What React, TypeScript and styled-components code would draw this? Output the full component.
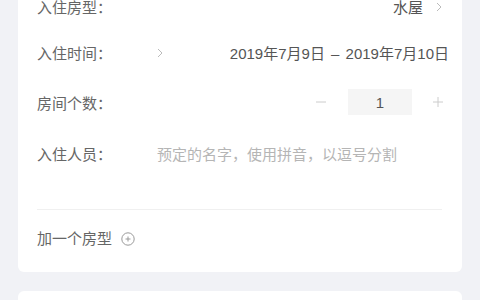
import React, { useState } from "react";
import styled, { createGlobalStyle } from "styled-components";

const GlobalStyle = createGlobalStyle`
  html, body {
    margin: 0;
    padding: 0;
    background: #f1f2f6;
    font-family: "Liberation Sans", "Noto Sans CJK SC", sans-serif;
  }
`;

const Page = styled.div`
  padding: 0 18px;
  margin-top: -17px;
  display: flex;
  flex-direction: column;
  gap: 19px;
`;

const Card = styled.div`
  background: #fff;
  border-radius: 6px;
  padding: 0 20px 0 19px;
`;

const Row = styled.div<{ $h: number }>`
  height: ${({ $h }) => $h}px;
  display: flex;
  align-items: center;
  font-size: 15px;
  color: #666;
`;

const Label = styled.div`
  width: 120px;
  flex-shrink: 0;
  color: #666;
`;

const Value = styled.div<{ $right?: boolean; $pull?: number }>`
  flex: 1;
  display: flex;
  align-items: center;
  justify-content: ${({ $right }) => ($right ? "flex-end" : "space-between")};
  margin-right: ${({ $pull }) => ($pull ? -$pull : 0)}px;
  color: #555;
  white-space: nowrap;
`;

const Dash = styled.span`
  margin: 0 2px;
`;

const Chevron = styled.svg<{ $gap?: number }>`
  width: 6px;
  height: 10px;
  margin-left: ${({ $gap }) => $gap ?? 0}px;
  margin-top: 2px;
  flex-shrink: 0;
`;

const Stepper = styled.div`
  display: flex;
  align-items: center;
  margin-right: -1px;
`;

const StepBtn = styled.button`
  width: 10px;
  height: 10px;
  padding: 0;
  border: none;
  background: none;
  display: flex;
  cursor: pointer;
`;

const Count = styled.div`
  width: 64px;
  height: 26px;
  margin: 0 21px 0 22px;
  background: #f5f5f5;
  display: flex;
  align-items: center;
  justify-content: center;
  color: #555;
  font-size: 15px;
`;

const GuestBlock = styled.div`
  height: 80px;
  display: flex;
  font-size: 15px;
  padding-top: 16px;
  box-sizing: border-box;
  line-height: 20px;
`;

const Placeholder = styled.div`
  color: #b5b5b5;
  white-space: nowrap;
`;

const Divider = styled.div`
  height: 1px;
  background: #f0f0f0;
`;

const Footer = styled.div`
  height: 62px;
  display: flex;
  align-items: flex-start;
  padding-top: 19px;
  box-sizing: border-box;
  line-height: 20px;
  font-size: 15px;
  color: #666;
  gap: 9px;
`;

const AddIcon = styled.svg`
  width: 14px;
  height: 14px;
  margin-top: 3px;
`;

const NextCard = styled.div`
  background: #fff;
  border-radius: 6px;
  height: 60px;
`;

const Arrow = ({ gap }: { gap?: number }) => (
  <Chevron $gap={gap} viewBox="0 0 6 10">
    <polyline points="1,1 5,5 1,9" fill="none" stroke="#bbb" strokeWidth="1" />
  </Chevron>
);

export default function App() {
  const [rooms, setRooms] = useState(1);

  return (
    <>
      <GlobalStyle />
      <Page>
        <Card>
          <Row $h={46}>
            <Label>入住房型：</Label>
            <Value $right>
              水屋
              <Arrow gap={13} />
            </Value>
          </Row>
          <Row $h={46}>
            <Label>入住时间：</Label>
            <Value $pull={7}>
              <Arrow />
              <span>
                2019年7月9日 <Dash>–</Dash> 2019年7月10日
              </span>
            </Value>
          </Row>
          <Row $h={54}>
            <Label>房间个数：</Label>
            <Value $right>
              <Stepper>
                <StepBtn onClick={() => setRooms((n) => Math.max(1, n - 1))}>
                  <svg width="10" height="10" viewBox="0 0 10 10">
                    <line x1="0" y1="5" x2="10" y2="5" stroke="#ccc" strokeWidth="1" />
                  </svg>
                </StepBtn>
                <Count>{rooms}</Count>
                <StepBtn onClick={() => setRooms((n) => n + 1)}>
                  <svg width="10" height="10" viewBox="0 0 10 10">
                    <line x1="0" y1="5" x2="10" y2="5" stroke="#ccc" strokeWidth="1" />
                    <line x1="5" y1="0" x2="5" y2="10" stroke="#ccc" strokeWidth="1" />
                  </svg>
                </StepBtn>
              </Stepper>
            </Value>
          </Row>
          <GuestBlock>
            <Label>入住人员：</Label>
            <Placeholder>预定的名字，使用拼音，以逗号分割</Placeholder>
          </GuestBlock>
          <Divider />
          <Footer>
            加一个房型
            <AddIcon viewBox="0 0 14 14">
              <circle cx="7" cy="7" r="6.2" fill="none" stroke="#999" strokeWidth="1" />
              <line x1="4.5" y1="7" x2="9.5" y2="7" stroke="#999" strokeWidth="1" />
              <line x1="7" y1="4.5" x2="7" y2="9.5" stroke="#999" strokeWidth="1" />
            </AddIcon>
          </Footer>
        </Card>
        <NextCard />
      </Page>
    </>
  );
}
